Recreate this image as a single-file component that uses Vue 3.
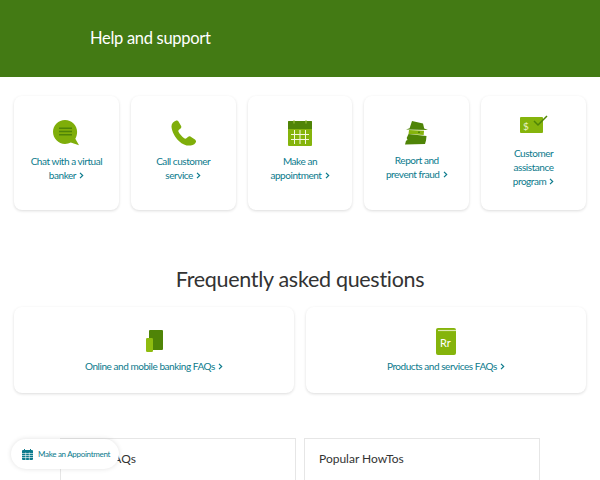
<template>
  <div class="page">
    <header class="hero">
      <h1>Help and support</h1>
    </header>

    <section class="top-row">
      <a v-for="item in topItems" :key="item.id" class="card top-card" href="#">
        <svg v-if="item.id === 'chat'" class="icon" width="26" height="26" viewBox="0 0 26 26">
          <path d="M12 0C5.400 0 0 5.200 0 11.800S5.400 24 12 24c2.100 0 4.100-.5 5.800-1.400L26 25.200l-3.700-6.400c1.200-2 1.800-4.400 1.800-7C24.100 5.200 18.700 0 12 0z" fill="#7fae0a" />
          <path d="M6 7.500h13v1.600H6zM6 10.700h13v1.600H6zM6 13.900h13v1.600H6z" fill="#4f8407" />
        </svg>
        <svg v-else-if="item.id === 'call'" class="icon" width="27" height="26" viewBox="0 0 27 27">
          <path d="M6 .5C3 1.500 1 3.500 1 7c.5 5 3.500 11 8 15 3.500 3.500 8 5 12 4.500 3-.5 5-2 5.500-4 .2-1-.5-1.700-1.500-2.500l-4-2.700c-1-.6-1.800-.5-2.600.2L16.500 19c-.8.6-1.500.5-2.300-.1-2.700-1.900-4.700-4.400-5.900-6.700-.3-.8-.2-1.400.5-2l1.700-1.500c.8-.8 1-1.600.5-2.500L8.300 1.500C7.700.6 7 .2 6 .5z" fill="#7fae0a" />
        </svg>
        <svg v-else-if="item.id === 'appt'" class="icon" width="24" height="26" viewBox="0 0 24 26">
          <rect x="0" y="1" width="24" height="25" rx="1" fill="#85b40c" />
          <path d="M0 2a1 1 0 0 1 1-1h22a1 1 0 0 1 1 1v7H0z" fill="#4f8407" />
          <path d="M6 0v3.500M18 0v3.500" stroke="#a5cb45" stroke-width="1" />
          <path d="M3 14.500h18M3 19.500h18M6.500 10v14M12 10v14M17.500 10v14" stroke="#f2f8dc" stroke-width="1" fill="none" />
        </svg>
        <svg v-else-if="item.id === 'fraud'" class="icon" width="23" height="24" viewBox="0 0 23 24">
          <path d="M7 0l11 2.500 1.200 5L23 9 1 8.500l3.600-1.300z" fill="#4f8407" />
          <path d="M4 9l15 .8-.3 4.200L3.500 13z" fill="#85b40c" />
          <path d="M13 10.500h2v1.500h-2z" fill="#4f8407" />
          <path d="M3.500 13l18 2-.5 4.500-1 3.500-20 .5 1-3.800 1.500-.7-.8-2z" fill="#4f8407" />
        </svg>
        <svg v-else class="icon assist" width="28" height="20" viewBox="0 0 28 20">
          <rect x="0" y="2" width="23" height="16" rx="1" fill="#85b40c" />
          <path d="M14 6l4 4 9-9" stroke="#4f8407" stroke-width="1.500" fill="none" />
          <text x="3" y="14.500" class="dollar">$</text>
        </svg>
        <span class="link-text">
          <span v-for="(line, i) in item.lines" :key="line" class="line">
            {{ line }}
            <svg v-if="i === item.lines.length - 1" class="chev" width="5" height="7" viewBox="0 0 5 7">
              <path d="M1 .8l2.700 2.700L1 6.200" stroke="currentColor" stroke-width="1.200" fill="none" />
            </svg>
          </span>
        </span>
      </a>
    </section>

    <h2 class="faq-title">Frequently asked questions</h2>

    <section class="faq-row">
      <a class="card faq-card" href="#">
        <span class="faq-icon">
          <svg width="17" height="22" viewBox="0 0 17 22">
            <rect x="3" y="0" width="14" height="20" rx="1" fill="#4f8407" />
            <rect x="0" y="8" width="7" height="14" rx="1.200" fill="#8fbc10" />
          </svg>
        </span>
        <span class="link-text">
          Online and mobile banking FAQs
          <svg class="chev" width="5" height="7" viewBox="0 0 5 7">
            <path d="M1 .8l2.700 2.700L1 6.200" stroke="currentColor" stroke-width="1.200" fill="none" />
          </svg>
        </span>
      </a>
      <a class="card faq-card" href="#">
        <span class="faq-icon">
          <svg width="20" height="27" viewBox="0 0 20 27">
            <rect x="0" y="0" width="20" height="27" rx="2" fill="#85b40c" />
            <path d="M2 2.500h18" stroke="#dcebb0" stroke-width="1.200" />
            <text x="4" y="18.500" class="rr">Rr</text>
          </svg>
        </span>
        <span class="link-text">
          Products and services FAQs
          <svg class="chev" width="5" height="7" viewBox="0 0 5 7">
            <path d="M1 .8l2.700 2.700L1 6.200" stroke="currentColor" stroke-width="1.200" fill="none" />
          </svg>
        </span>
      </a>
    </section>

    <section class="lists">
      <div class="list-box">
        <h3>Top 5 FAQs</h3>
        <a class="link-text" href="#">What is an online account transfer?</a>
      </div>
      <div class="list-box">
        <h3>Popular HowTos</h3>
        <a class="link-text" href="#">How to send money with Zelle®</a>
      </div>
    </section>

    <a class="pill" href="#">
      <svg width="11" height="11" viewBox="0 0 11 11">
        <rect x="0" y="1" width="11" height="10" rx="1" fill="#0b7a8c" />
        <path d="M0 4.500h11M0 6.500h11M0 8.500h11M3.700 3.500V11M7.300 3.500V11" stroke="#fff" stroke-width="0.600" />
        <path d="M2.500 0v2M8.500 0v2" stroke="#0b7a8c" stroke-width="1" />
      </svg>
      <span>Make an Appointment</span>
    </a>
  </div>
</template>

<script setup>
const topItems = [
  { id: "chat", lines: ["Chat with a virtual", "banker"] },
  { id: "call", lines: ["Call customer", "service"] },
  { id: "appt", lines: ["Make an", "appointment"] },
  { id: "fraud", lines: ["Report and", "prevent fraud"] },
  { id: "assist", lines: ["Customer", "assistance", "program"] },
];
</script>

<style>
html,
body {
  margin: 0;
  background: #fff;
}
</style>

<style scoped>
.page {
  position: relative;
  height: 480px;
  overflow: hidden;
  font-family: Lato, "Noto Sans", sans-serif;
  background: #fff;
}

a {
  text-decoration: none;
}

.hero {
  height: 75px;
  background: #437a14;
  display: flex;
  align-items: center;
  padding: 0 0 2px 90px;
}

.hero h1 {
  margin: 0;
  font-size: 16.500px;
  letter-spacing: -0.3px;
  font-weight: 400;
  color: #fff;
}

.top-row {
  display: grid;
  grid-template-columns: repeat(5, 1fr);
  gap: 12px;
  padding: 19px 14px 0;
}

.card {
  display: flex;
  flex-direction: column;
  align-items: center;
  background: #fff;
  border-radius: 8px;
  box-shadow: 0 1px 3px rgba(0, 0, 0, 0.14);
}

.top-card {
  box-sizing: border-box;
  height: 114px;
  justify-content: center;
  padding-bottom: 4px;
  text-align: center;
}

.icon {
  margin-bottom: 8px;
}

.icon.assist {
  margin-bottom: 11px;
}

.link-text {
  font-size: 10px;
  letter-spacing: -0.45px;
  line-height: 14px;
  color: #0b7a8c;
}

.line {
  display: block;
}

.chev {
  margin-left: 1px;
}

.dollar {
  font-size: 10px;
  fill: #e9f3c8;
  font-family: Lato, sans-serif;
}

.rr {
  font-size: 11px;
  fill: #fff;
  font-family: Lato, sans-serif;
}

.faq-title {
  margin: 54px 0 0;
  height: 43px;
  line-height: 30px;
  text-align: center;
  font-size: 21.500px;
  letter-spacing: -0.3px;
  font-weight: 400;
  color: #333;
}

.faq-row {
  display: grid;
  grid-template-columns: 1fr 1fr;
  gap: 12px;
  padding: 0 14px;
}

.faq-card {
  box-sizing: border-box;
  height: 86px;
  justify-content: center;
  gap: 4px;
}

.faq-icon {
  height: 27px;
  display: flex;
  align-items: center;
}

.lists {
  display: flex;
  gap: 8px;
  padding: 45px 0 0 60px;
}

.list-box {
  width: 236px;
  box-sizing: border-box;
  height: 80px;
  padding: 12px 14px;
  border: 1px solid #e6e6e6;
  background: #fff;
}

.list-box h3 {
  margin: 0 0 7px;
  font-size: 12px;
  line-height: 15px;
  font-weight: 400;
  color: #333;
}

.pill {
  position: absolute;
  left: 11px;
  top: 439px;
  width: 108px;
  height: 30px;
  box-sizing: border-box;
  display: flex;
  align-items: center;
  gap: 5px;
  padding-left: 11px;
  white-space: nowrap;
  background: #fff;
  border-radius: 15px;
  box-shadow: 0 0 5px rgba(0, 0, 0, 0.12);
  font-size: 8px;
  letter-spacing: -0.3px;
  color: #0b7a8c;
}
</style>
